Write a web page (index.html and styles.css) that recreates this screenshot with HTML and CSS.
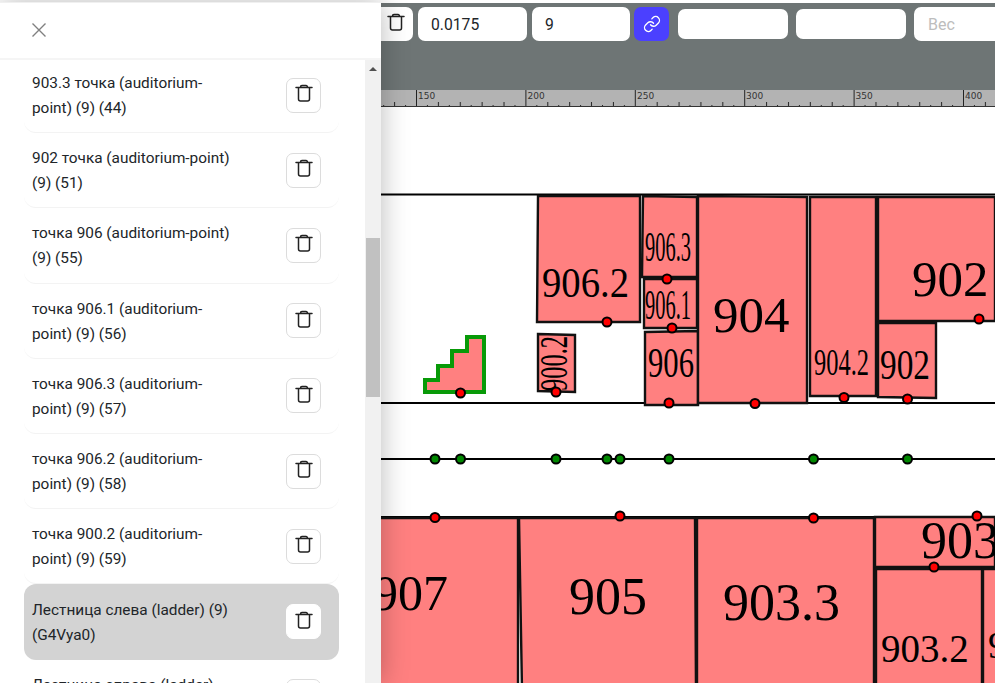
FILE: index.html
```html
<!DOCTYPE html>
<html lang="ru">
<head>
<meta charset="utf-8">
<title>Редактор карты</title>
<link rel="stylesheet" href="styles.css">
</head>
<body>
<svg class="defs" width="0" height="0" aria-hidden="true">
  <symbol id="trash" viewBox="0 0 24 24">
    <path d="M4 6.500h16M8.500 6.500V6a1.500 1.500 0 0 1 1.500-1.500h4a1.500 1.500 0 0 1 1.500 1.500v.5M6.500 6.500V18a2 2 0 0 0 2 2h7a2 2 0 0 0 2-2V6.500" fill="none" stroke="currentColor" stroke-width="1.500" stroke-linecap="round" stroke-linejoin="round"/>
  </symbol>
</svg>
<div class="page">
  <aside class="sidebar">
    <header class="side-head">
      <svg class="close" viewBox="0 0 16 16"><path d="M1.500 1.500l13 13M14.500 1.500l-13 13"/></svg>
    </header>
    <div class="side-body">
      <ul class="list">
        <li class="item"><span class="item-text">903.3 точка (auditorium-point) (9) (44)</span><button class="del"><svg class="trash"><use href="#trash"/></svg></button></li>
        <li class="item"><span class="item-text">902 точка (auditorium-point) (9) (51)</span><button class="del"><svg class="trash"><use href="#trash"/></svg></button></li>
        <li class="item"><span class="item-text">точка 906 (auditorium-point) (9) (55)</span><button class="del"><svg class="trash"><use href="#trash"/></svg></button></li>
        <li class="item"><span class="item-text">точка 906.1 (auditorium-point) (9) (56)</span><button class="del"><svg class="trash"><use href="#trash"/></svg></button></li>
        <li class="item"><span class="item-text">точка 906.3 (auditorium-point) (9) (57)</span><button class="del"><svg class="trash"><use href="#trash"/></svg></button></li>
        <li class="item"><span class="item-text">точка 906.2 (auditorium-point) (9) (58)</span><button class="del"><svg class="trash"><use href="#trash"/></svg></button></li>
        <li class="item"><span class="item-text">точка 900.2 (auditorium-point) (9) (59)</span><button class="del"><svg class="trash"><use href="#trash"/></svg></button></li>
        <li class="item active"><span class="item-text">Лестница слева (ladder) (9) (G4Vya0)</span><button class="del"><svg class="trash"><use href="#trash"/></svg></button></li>
        <li class="item"><span class="item-text">Лестница справа (ladder) (9) (G4Vya1)</span><button class="del"><svg class="trash"><use href="#trash"/></svg></button></li>
      </ul>
      <div class="scrollbar">
        <span class="arrow"></span>
        <span class="thumb"></span>
      </div>
    </div>
  </aside>
  <main class="main">
    <div class="toolbar">
      <button class="tool first"><svg class="trash"><use href="#trash"/></svg></button>
      <input class="field w109" value="0.0175">
      <input class="field w98" value="9">
      <button class="tool link"><svg class="link-icon" viewBox="0 0 24 24"><path d="M10 13a5 5 0 0 0 7.540.540l3-3a5 5 0 0 0-7.070-7.070l-1.720 1.710M14 11a5 5 0 0 0-7.540-.540l-3 3a5 5 0 0 0 7.070 7.070l1.710-1.710"/></svg></button>
      <input class="field short w110">
      <input class="field short w110">
      <input class="field last" placeholder="Вес">
    </div>
    <svg class="ruler" viewBox="381 90 614 17">
      <defs>
        <pattern id="ticks" patternUnits="userSpaceOnUse" x="416" y="90" width="109.400" height="17">
          <path d="M0.500 0v17M11.400 15v2M22.400 12v5M33.300 15v2M44.300 12v5M55.200 15v2M66.100 12v5M77.100 15v2M88 12v5M99 15v2" stroke="#222" fill="none"/>
        </pattern>
      </defs>
      <rect x="381" y="90" width="614" height="17" fill="#b3b3b3"/>
      <rect x="381" y="90" width="614" height="17" fill="url(#ticks)"/>
      <path d="M381 106.500h614" stroke="#333"/>
      <g class="ruler-label">
        <text x="418" y="99">150</text>
        <text x="527.500" y="99">200</text>
        <text x="637" y="99">250</text>
        <text x="746" y="99">300</text>
        <text x="855.500" y="99">350</text>
        <text x="965" y="99">400</text>
      </g>
    </svg>
    <svg class="plan" viewBox="381 107 614 576">
      <g class="walls">
        <path d="M381 194.500h614M381 403h614M381 459h614M381 517h614"/>
      </g>
      <g class="rooms">
        <polygon points="538,196 640,196 640,322 537,322"/>
        <polygon points="643,196 697,197 697,277 642,277"/>
        <polygon points="644,279 697,279 697,328 644,328"/>
        <polygon points="645,332 698,331 698,405 645,405"/>
        <polygon points="698,196 807,197 807,403 698,403"/>
        <polygon points="810,197 876,197 876,396 810,396"/>
        <polygon points="878,197 995,197 995,321 878,321"/>
        <polygon points="878,323 936,323 936,398 878,397"/>
        <polygon points="538,334 575,335 575,392 538,391"/>
        <polygon points="375,518 518,518 518,690 375,690"/>
        <polygon points="519,518 695,518 696,690 522,690"/>
        <polygon points="697,518 874,518 874,690 697,690"/>
        <polygon points="875,517 995,517 995,567 875,567"/>
        <polygon points="876,569 982,569 982,690 876,690"/>
        <polygon points="983,569 1000,569 1000,690 983,690"/>
      </g>
      <polygon class="ladder" points="425,380 438,380 438,366 452,366 452,351 467,351 467,337 484,337 484,392 425,392"/>
      <g class="labels">
        <text x="542" y="297" font-size="43" textLength="87" lengthAdjust="spacingAndGlyphs">906.2</text>
        <text x="645" y="261" font-size="43" textLength="46" lengthAdjust="spacingAndGlyphs">906.3</text>
        <text x="645" y="319" font-size="43" textLength="46" lengthAdjust="spacingAndGlyphs">906.1</text>
        <text x="648" y="377" font-size="43" textLength="46" lengthAdjust="spacingAndGlyphs">906</text>
        <text transform="translate(567 391) rotate(-90)" font-size="40" textLength="55" lengthAdjust="spacingAndGlyphs">900.2</text>
        <text x="713" y="332" font-size="51">904</text>
        <text x="814" y="375" font-size="38" textLength="55" lengthAdjust="spacingAndGlyphs">904.2</text>
        <text x="880" y="379" font-size="42" textLength="50" lengthAdjust="spacingAndGlyphs">902</text>
        <text x="912" y="296" font-size="51">902</text>
        <text x="373" y="610" font-size="50">907</text>
        <text x="569" y="614" font-size="52">905</text>
        <text x="723" y="620" font-size="52">903.3</text>
        <text x="921" y="558" font-size="52">903</text>
        <text x="881" y="662" font-size="39">903.2</text>
        <text x="988" y="658" font-size="38">9</text>
      </g>
      <g class="dots red">
        <circle cx="460.500" cy="393" r="4.500"/><circle cx="556" cy="392" r="4.500"/>
        <circle cx="607" cy="322" r="4.500"/><circle cx="667" cy="279" r="4.500"/>
        <circle cx="672" cy="328" r="4.500"/><circle cx="669" cy="403" r="4.500"/>
        <circle cx="755" cy="403.500" r="4.500"/><circle cx="844" cy="397.500" r="4.500"/>
        <circle cx="907.500" cy="399" r="4.500"/><circle cx="979" cy="319" r="4.500"/>
        <circle cx="435" cy="517.500" r="4.500"/><circle cx="620" cy="516" r="4.500"/>
        <circle cx="813.500" cy="518" r="4.500"/><circle cx="977" cy="516" r="4.500"/>
        <circle cx="934" cy="567" r="4.500"/>
      </g>
      <g class="dots green">
        <circle cx="435" cy="459" r="4.500"/><circle cx="460.500" cy="459" r="4.500"/>
        <circle cx="556" cy="459" r="4.500"/><circle cx="607" cy="459" r="4.500"/>
        <circle cx="620" cy="459" r="4.500"/><circle cx="669" cy="459" r="4.500"/>
        <circle cx="813.500" cy="459" r="4.500"/><circle cx="907.500" cy="459" r="4.500"/>
      </g>
    </svg>
  </main>
</div>
</body>
</html>
```

FILE: styles.css
```css
* { box-sizing: border-box; }
html, body { margin: 0; padding: 0; height: 100%; overflow: hidden; background: #fff; }
body { font-family: Roboto, "Noto Sans", sans-serif; color: #212529; }
.defs { position: absolute; }
.page { display: flex; height: 683px; padding-top: 3px; }

.sidebar {
  position: relative; z-index: 2; width: 381px; flex: none;
  display: flex; flex-direction: column; background: #fff;
  border-top: 1px solid #f0f0f0; margin-top: -1px;
  box-shadow: 0 0 26px rgba(0, 0, 0, .28);
}
.side-head { height: 57px; flex: none; display: flex; align-items: center; padding: 0 0 2px 31px; border-bottom: 2px solid #f5f5f5; }
.close { width: 16px; height: 16px; fill: none; stroke: #808080; stroke-width: 1.400; }
.side-body { flex: 1; min-height: 0; display: flex; overflow: hidden; }
.list { flex: 1; list-style: none; margin: -2px 0 0; padding: 0 26px 0 24px; overflow: hidden; }
.item {
  display: flex; align-items: center; justify-content: space-between;
  height: 75.200px; padding: 0 18px 0 8px; border-radius: 0 0 12px 12px;
  border-bottom: 1px solid #f3f3f3; font-size: 15.360px; line-height: 25px;
}
.item.active { background: #d3d3d3; border-radius: 12px; border-bottom: 0; }
.item-text { width: 200px; padding-top: 2px; }
.del, .tool {
  display: flex; align-items: center; justify-content: center; padding: 0;
  width: 35px; height: 35px; flex: none; background: #fff; color: #222;
  border: 1px solid #dcdcdc; border-radius: 7px;
}
.active .del { border-color: #fff; }
.trash { width: 24px; height: 24px; transform: translateY(-2px); }
.scrollbar { position: relative; width: 16px; flex: none; background: #f1f1f1; }
.arrow {
  position: absolute; left: 4px; top: 7px; width: 0; height: 0;
  border: 4px solid transparent; border-top: 0; border-bottom: 4px solid #505050;
}
.thumb { position: absolute; left: 1px; right: 1px; top: 178px; height: 159px; background: #c1c1c1; }

.main { flex: 1; min-width: 0; display: flex; flex-direction: column; }
.toolbar {
  height: 87px; flex: none; display: flex; align-items: flex-start; gap: 5px;
  padding-top: 4px; background: #6e7575; overflow: hidden;
}
.tool { border: 0; }
.tool.first { width: 32px; height: 34px; border-radius: 0 7px 7px 0; padding-right: 2px; }
.tool.link { width: 35px; height: 34px; background: #4b40ff; color: #fff; margin: 0 4px 0 -1px; }
.link-icon { width: 18px; height: 18px; fill: none; stroke: #fff; stroke-width: 1.800; stroke-linecap: round; stroke-linejoin: round; }
.field {
  height: 34px; border: 0; border-radius: 7px; background: #fff; padding: 0 13px;
  font: 15.700px Roboto, sans-serif; color: #212529; outline: 0; flex: none;
}
.field::placeholder { color: #bdbdbd; opacity: 1; font-size: 16px; }
.w109 { width: 109px; }
.w98 { width: 98px; }
.short { height: 30px; margin-top: 2px; margin-right: 3px; }
.w110 { width: 110px; }
.last { width: 120px; padding-left: 14px; }

.ruler { display: block; width: 614px; height: 17px; flex: none; }
.ruler-label text { font: 9px "DejaVu Sans", sans-serif; fill: #333; }
.plan { display: block; width: 614px; height: 576px; flex: none; background: #fff; }
.walls path { fill: none; stroke: #000; stroke-width: 2; }
.rooms polygon { fill: #ff8080; stroke: #111; stroke-width: 2.400; }
.ladder { fill: #ff8080; stroke: #089a08; stroke-width: 4; }
.labels text { font-family: "Liberation Serif", serif; fill: #000; }
.dots circle { stroke: #000; stroke-width: 2; }
.red circle { fill: #f00; }
.green circle { fill: #080; }
```
